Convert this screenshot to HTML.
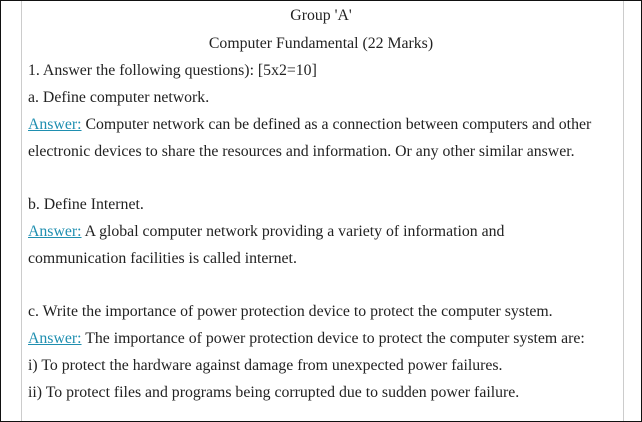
<!DOCTYPE html>
<html><head><meta charset="utf-8"><style>
html,body{margin:0;padding:0;background:#fff}
body{width:642px;height:422px;position:relative;overflow:hidden;font-family:"Liberation Serif",serif;font-size:15.8px;color:#222}
.frame{position:absolute;left:0;top:0;width:640px;height:420px;border:1px solid #111}
.vl{position:absolute;top:1px;bottom:1px;width:1px;background:#ccc}
.l{position:absolute;left:28px;white-space:nowrap;line-height:18px}
.c{left:0;width:642px;text-align:center}
a{color:#1f8fb0;text-decoration:underline}
</style></head><body>
<div class="frame"></div>
<div class="vl" style="left:21px"></div>
<div class="vl" style="left:623px"></div>
<div class="l c" style="top:7px">Group 'A'</div>
<div class="l c" style="top:35px">Computer Fundamental (22 Marks)</div>
<div class="l" style="top:62px">1. Answer the following questions): [5x2=10]</div>
<div class="l" style="top:89px">a. Define computer network.</div>
<div class="l" style="top:116px"><a>Answer:</a> Computer network can be defined as a connection between computers and other</div>
<div class="l" style="top:143px">electronic devices to share the resources and information. Or any other similar answer.</div>
<div class="l" style="top:196px">b. Define Internet.</div>
<div class="l" style="top:223px"><a>Answer:</a> A global computer network providing a variety of information and</div>
<div class="l" style="top:250px">communication facilities is called internet.</div>
<div class="l" style="top:303px">c. Write the importance of power protection device to protect the computer system.</div>
<div class="l" style="top:330px"><a>Answer:</a> The importance of power protection device to protect the computer system are:</div>
<div class="l" style="top:357px">i) To protect the hardware against damage from unexpected power failures.</div>
<div class="l" style="top:384px">ii) To protect files and programs being corrupted due to sudden power failure.</div>
</body></html>
